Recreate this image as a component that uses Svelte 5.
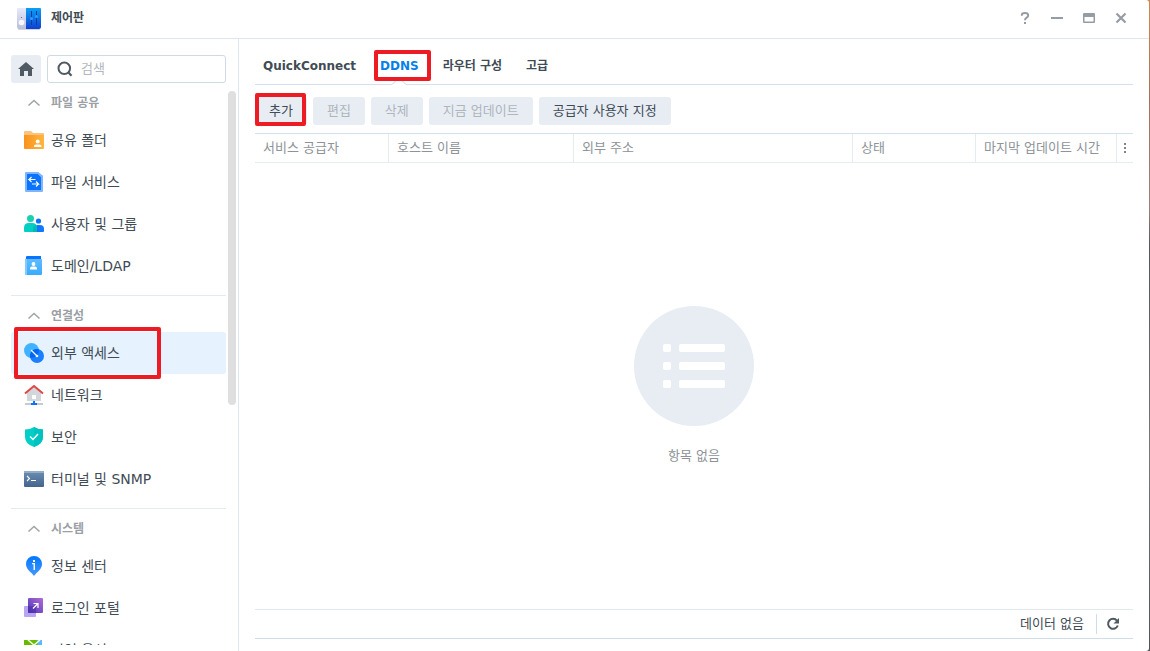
<script>
  let query = $state("");
  let activeTab = $state("DDNS");
  let selected = $state("외부 액세스");
  let closed = $state([]);

  const tabs = ["QuickConnect", "DDNS", "라우터 구성", "고급"];

  const actions = [
    { label: "추가", marked: true },
    { label: "편집", disabled: true },
    { label: "삭제", disabled: true },
    { label: "지금 업데이트", disabled: true },
    { label: "공급자 사용자 지정" },
  ];

  const columns = ["서비스 공급자", "호스트 이름", "외부 주소", "상태", "마지막 업데이트 시간"];

  const groups = [
    {
      name: "파일 공유",
      items: [
        { name: "공유 폴더", icon: "folder" },
        { name: "파일 서비스", icon: "file" },
        { name: "사용자 및 그룹", icon: "users" },
        { name: "도메인/LDAP", icon: "domain" },
      ],
    },
    {
      name: "연결성",
      items: [
        { name: "외부 액세스", icon: "access", marked: true },
        { name: "네트워크", icon: "network" },
        { name: "보안", icon: "shield" },
        { name: "터미널 및 SNMP", icon: "terminal" },
      ],
    },
    {
      name: "시스템",
      items: [
        { name: "정보 센터", icon: "info" },
        { name: "로그인 포털", icon: "portal" },
        { name: "지역 옵션", icon: "region" },
      ],
    },
  ];

  function toggle(name) {
    closed = closed.includes(name) ? closed.filter((n) => n !== name) : [...closed, name];
  }

  function select(event, name) {
    event.preventDefault();
    selected = name;
  }
</script>

{#snippet icon(name)}
  <svg class="icon" width="20" height="20" viewBox="0 0 20 20" aria-hidden="true">
    {#if name === "folder"}
      <path d="M0 2q0-1 1-1h6l2 2h10q1 0 1 1v5H0z" fill="#fbc47c" />
      <path d="M0 5h20v13q0 1-1 1H1q-1 0-1-1z" fill="url(#g-folder)" />
      <circle cx="13.700" cy="11.500" r="2" fill="#fff" />
      <path d="M10 17v-.5q0-2 2-2h3.500q2 0 2 2v.5z" fill="#fff" />
    {:else if name === "file"}
      <path d="M1 1q0-1 1-1h12l5 4v15q0 1-1 1H2q-1 0-1-1z" fill="#7fb5ff" />
      <path d="M3 2h11l3 3v13H3z" fill="#0a73ff" />
      <path d="M14 0l5 4v1h-2l-3-3z" fill="#7fb5ff" />
      <path d="M7.500 5 5 7.500h6.500M7.500 10 5 7.500M12 9.500l2.500 2.500H8M12 14.500l2.500-2.500" fill="none" stroke="#fff" stroke-width="1.100" />
    {:else if name === "users"}
      <circle cx="6.500" cy="4.500" r="3.500" fill="#1bd0b0" />
      <circle cx="14.500" cy="7" r="2.600" fill="#0a73ff" />
      <path d="M10 18v-3q0-4 4-4h2q4 0 4 4v2q0 1-1 1z" fill="#1177ff" />
      <path d="M0 17v-3q0-5 5-5h3q5 0 5 5v4H1q-1 0-1-1z" fill="#00cfc3" />
      <path d="M9 18v-3q0-3 3-4 1 1.500 1 4v3z" fill="#00b9b4" />
    {:else if name === "domain"}
      <path d="M2 1q0-1 1-1h14v4H2z" fill="#0a73ff" />
      <path d="M1 2q0 1 1 1h15q1 0 1 1v14q0 1-1 1H2q-1 0-1-1z" fill="url(#g-domain)" />
      <path d="M1 3h2v16H2q-1 0-1-1z" fill="#82cbff" />
      <circle cx="9.500" cy="8" r="1.900" fill="#fff" />
      <path d="M6 13.500v-1q0-2 2-2h3q2 0 2 2v1z" fill="#fff" />
    {:else if name === "access"}
      <circle cx="7.500" cy="7.500" r="7.500" fill="#3fb3ff" />
      <circle cx="13" cy="13" r="7" fill="#1a80ff" />
      <path d="M14.700 6.200a7.500 7.500 0 0 1-8.600 8.500 7 7 0 0 1 8.600-8.500z" fill="#0067ee" />
      <path d="M7 7l5.500 5.500" stroke="#fff" stroke-width="1.200" />
      <circle cx="13" cy="13" r="1.300" fill="#fff" />
    {:else if name === "network"}
      <path d="M3 7l7-5 7 5v9H3z" fill="#d3d6da" />
      <path d="M1 8.500 10 1l9 7.500" fill="none" stroke="#dd4a45" stroke-width="2" />
      <rect x="8" y="10" width="4" height="4" fill="#fff" />
      <path d="M1 18h18v2H1z" fill="#c6cbd1" />
      <path d="M9 16h2v2h2v2H7v-2h2z" fill="#0a73ff" />
    {:else if name === "shield"}
      <path d="M10 0q4 2.500 9 2.500V10q0 7-9 10-9-3-9-10V2.500Q6 2.500 10 0z" fill="#00cfc8" />
      <path d="M10 0q4 2.500 9 2.500V10q0 7-9 10z" fill="#00c2bf" />
      <path d="M6 9.500l3 3 5-5.500" fill="none" stroke="#fff" stroke-width="1.500" />
    {:else if name === "terminal"}
      <rect y="2" width="20" height="16" rx="1" fill="url(#g-terminal)" />
      <path d="M0 4V3q0-1 1-1h18q1 0 1 1v1z" fill="#94acc7" />
      <path d="M3 7l2.500 2.500L3 12M7 11.500h5" fill="none" stroke="#fff" stroke-width="1.100" />
    {:else if name === "info"}
      <path d="M10 0a8 8 0 0 1 8 8c0 4-3 7-5.500 9L10 20l-2.500-3C5 15 2 12 2 8a8 8 0 0 1 8-8z" fill="url(#g-info)" />
      <path d="M9 4h2v2H9zM8 7h3v7H9.500V8.200H8z" fill="#fff" />
    {:else if name === "portal"}
      <rect y="8" width="12" height="11" rx="1" fill="#baa5f2" />
      <rect x="4" width="15" height="15" rx="1" fill="url(#g-portal)" />
      <path d="M4 8h7q1 0 1 1v6H5q-1 0-1-1z" fill="#4228a0" opacity=".45" />
      <path d="M9 10.500 13.500 6M9.500 5.500H14V10" fill="none" stroke="#fff" stroke-width="1.200" />
    {:else}
      <rect width="18" height="20" fill="#66bb00" />
      <path d="M13 0h5v20h-2z" fill="#5cb8ff" />
      <path d="M4 0l6 5 6-5" fill="none" stroke="#f3ffdc" stroke-width="1.500" />
    {/if}
  </svg>
{/snippet}

<svg class="defs" width="0" height="0" aria-hidden="true">
  <defs>
    <linearGradient id="g-folder"><stop stop-color="#f9921d" /><stop offset="1" stop-color="#ffb63d" /></linearGradient>
    <linearGradient id="g-domain" x2="0" y2="1"><stop stop-color="#62bdff" /><stop offset="1" stop-color="#38abff" /></linearGradient>
    <linearGradient id="g-terminal" x2="0" y2="1"><stop stop-color="#6d8fb3" /><stop offset="1" stop-color="#44648c" /></linearGradient>
    <linearGradient id="g-info" x2="0" y2="1"><stop stop-color="#0077ff" /><stop offset="1" stop-color="#4798ff" /></linearGradient>
    <linearGradient id="g-portal" x1="1" x2="0" y2="1"><stop stop-color="#b36bd6" /><stop offset="1" stop-color="#4a35b8" /></linearGradient>
    <linearGradient id="g-panel" x2="0" y2="1"><stop stop-color="#0ba0f5" /><stop offset="1" stop-color="#103fd2" /></linearGradient>
    <linearGradient id="g-case" x2="0" y2="1"><stop stop-color="#e6eafa" /><stop offset="1" stop-color="#b9bedb" /></linearGradient>
  </defs>
</svg>

<div class="window">
  <header class="titlebar">
    <svg class="logo" width="24" height="24" viewBox="0 0 24 24" aria-hidden="true">
      <rect x="1" y="21" width="22" height="3" rx="1" fill="#d3d5dc" />
      <path d="M0 3q0-1 1-1h8v21H2q-2 0-2-2z" fill="url(#g-case)" />
      <path d="M9 2h14q1 0 1 1v18q0 2-2 2H9z" fill="url(#g-panel)" />
      <circle cx="4.500" cy="16.500" r="2.800" fill="#f7f8ff" />
      <circle cx="4.500" cy="11.500" r=".6" fill="#666b85" />
      <path d="M14.500 5v14M19.500 5v14" stroke="#0b3c94" />
      <circle cx="14.500" cy="12.500" r="1.600" fill="#2a9bff" />
      <circle cx="19.500" cy="10.500" r="1.600" fill="#2a9bff" />
    </svg>
    <h1>제어판</h1>
    <button class="win" aria-label="도움말">
      <svg width="14" height="14" viewBox="0 0 14 14"><path d="M3.800 4.800V4.300Q3.800 2 7 2t3.200 2.400Q10.200 5.700 8.600 6.700T7 9.300M7 11v2" fill="none" stroke="currentColor" stroke-width="2" /></svg>
    </button>
    <button class="win" aria-label="최소화">
      <svg width="14" height="14" viewBox="0 0 14 14"><path d="M1 7h12" stroke="currentColor" stroke-width="2" /></svg>
    </button>
    <button class="win" aria-label="최대화">
      <svg width="14" height="14" viewBox="0 0 14 14"><path d="M2 2h10q1 0 1 1v8q0 1-1 1H2q-1 0-1-1V3q0-1 1-1zM2.500 6v4.500h9V6z" fill="currentColor" fill-rule="evenodd" /></svg>
    </button>
    <button class="win" aria-label="닫기">
      <svg width="14" height="14" viewBox="0 0 14 14"><path d="M2.500 2.500l9 9M11.500 2.500l-9 9" stroke="currentColor" stroke-width="2.200" /></svg>
    </button>
  </header>

  <div class="body">
    <aside>
      <div class="finder">
        <button class="home" aria-label="홈">
          <svg width="16" height="14" viewBox="0 0 16 14"><path d="M8 0 0 7h2v7h4V9h4v5h4V7h2z" fill="currentColor" /></svg>
        </button>
        <label class="search">
          <svg width="16" height="16" viewBox="0 0 16 16" aria-hidden="true"><circle cx="7.300" cy="7.300" r="5.800" fill="none" stroke="currentColor" stroke-width="2" /><path d="M11 11l3.500 3.800" stroke="currentColor" stroke-width="2.200" /></svg>
          <input type="text" placeholder="검색" aria-label="검색" bind:value={query} />
        </label>
      </div>

      <nav>
        {#each groups as group}
          <section>
            <button class="group" onclick={() => toggle(group.name)}>
              <svg class:closed={closed.includes(group.name)} width="20" height="12" viewBox="0 0 20 12" aria-hidden="true"><path d="M4.500 8.500 10 3.500l5.500 5" fill="none" stroke="#a0a5aa" stroke-width="1.600" /></svg>
              {group.name}
            </button>
            {#if !closed.includes(group.name)}
              {#each group.items as item}
                <a
                  href="#{item.icon}"
                  class="item"
                  class:selected={selected === item.name}
                  class:marked={item.marked}
                  onclick={(e) => select(e, item.name)}
                >
                  {@render icon(item.icon)}
                  {item.name}
                </a>
              {/each}
            {/if}
          </section>
        {/each}
        <div class="thumb"></div>
      </nav>
    </aside>

    <main>
      <div class="tabs" role="tablist">
        {#each tabs as tab}
          <button
            role="tab"
            aria-selected={activeTab === tab}
            class="tab"
            class:active={activeTab === tab}
            class:marked={tab === "DDNS"}
            onclick={() => (activeTab = tab)}>{tab}</button>
        {/each}
      </div>

      <div class="toolbar">
        {#each actions as action}
          <button class="action" class:marked={action.marked} disabled={action.disabled}>{action.label}</button>
        {/each}
      </div>

      <table>
        <colgroup>
          <col class="provider" />
          <col class="host" />
          <col />
          <col class="status" />
          <col class="updated" />
          <col class="more" />
        </colgroup>
        <thead>
          <tr>
            {#each columns as column}
              <th scope="col">{column}</th>
            {/each}
            <th class="menu">
              <button aria-label="열 선택">
                <svg width="4" height="12" viewBox="0 0 4 12"><path d="M1 1h2v2H1zM1 5h2v2H1zM1 9h2v2H1z" fill="#80858b" /></svg>
              </button>
            </th>
          </tr>
        </thead>
      </table>

      <div class="empty">
        <svg width="120" height="120" viewBox="0 0 120 120" aria-hidden="true">
          <circle cx="60" cy="60" r="60" fill="#e8edf4" />
          {#each [38, 56, 74] as y}
            <rect x="29" {y} width="8" height="8" rx="2" fill="#fff" />
            <rect x="45" {y} width="46" height="8" rx="2" fill="#fff" />
          {/each}
        </svg>
        <p>항목 없음</p>
      </div>

      <footer>
        <span>데이터 없음</span>
        <button class="refresh" aria-label="새로 고침">
          <svg width="14" height="14" viewBox="0 0 14 14"><path d="M11 3.600A5 5 0 1 0 11.800 8.500" fill="none" stroke="currentColor" stroke-width="2" /><path d="M13 1v5.500H7.500z" fill="currentColor" /></svg>
        </button>
      </footer>
    </main>
  </div>
</div>

<style>
  :global(body) {
    margin: 0;
    background: linear-gradient(#d08a50, #a8705c 15%, #99807c 32%, #55555c 38%, #77777c 70%, #505358);
  }

  .defs {
    position: absolute;
  }

  .window {
    display: flex;
    flex-direction: column;
    height: 100vh;
    margin-right: 1px;
    border-radius: 0 3px 3px 0;
    overflow: hidden;
    background: #fff;
    color: #414b55;
    font-family: "DejaVu Sans", "Noto Sans CJK KR", sans-serif;
    font-size: 13px;
    line-height: 20px;
  }

  button {
    padding: 0;
    border: 0;
    background: none;
    color: inherit;
    font: inherit;
    cursor: pointer;
  }

  svg {
    flex: none;
    display: block;
  }

  .titlebar {
    display: flex;
    align-items: center;
    height: 36px;
    padding: 0 12px 2px 17px;
    border-bottom: 1px solid #dfe6ee;
  }

  .titlebar h1 {
    flex: 1;
    margin: 0 0 0 10px;
    font-size: 12px;
    font-weight: bold;
  }

  .win {
    display: flex;
    justify-content: center;
    width: 32px;
    color: #969ca3;
  }

  .body {
    flex: 1;
    display: flex;
    min-height: 0;
  }

  aside {
    display: flex;
    flex-direction: column;
    flex: none;
    width: 238px;
    padding: 16px 0 6px;
    border-right: 1px solid #dfe6ee;
  }

  .finder {
    display: flex;
    gap: 6px;
    margin: 0 12px 2px 11px;
  }

  .home {
    display: flex;
    align-items: center;
    justify-content: center;
    width: 30px;
    height: 28px;
    border-radius: 3px;
    background: #e8edf4;
    color: #505a64;
  }

  .search {
    flex: 1;
    display: flex;
    align-items: center;
    gap: 8px;
    height: 26px;
    padding: 0 8px 0 9px;
    border: 1px solid #d0dae5;
    border-radius: 3px;
    color: #505a64;
  }

  .search input {
    flex: 1;
    width: 0;
    padding: 0;
    border: 0;
    outline: none;
    background: none;
    color: #414b55;
    font: inherit;
  }

  .search input::placeholder {
    color: #b3b8be;
    opacity: 1;
  }

  nav {
    position: relative;
    flex: 1;
    min-height: 0;
    overflow: hidden;
    padding: 0 12px 0 11px;
  }

  section + section {
    margin-top: 8px;
    padding-top: 2px;
    border-top: 1px solid #e4eaf1;
  }

  .group {
    display: flex;
    align-items: center;
    gap: 7px;
    width: 100%;
    height: 34px;
    padding: 2px 0 0 13px;
    color: #9ba0a6;
    font-size: 12px;
    font-weight: bold;
  }

  .closed {
    transform: rotate(180deg);
  }

  .item {
    position: relative;
    display: flex;
    align-items: center;
    gap: 7px;
    height: 42px;
    padding-left: 13px;
    border-radius: 3px;
    color: #414b55;
    font-size: 14px;
    text-decoration: none;
  }

  .item.selected {
    background: #e6f2fe;
  }

  .thumb {
    position: absolute;
    top: 6px;
    right: 2px;
    width: 8px;
    height: 56%;
    border-radius: 4px;
    background: #dfdfdf;
  }

  main {
    flex: 1;
    display: flex;
    flex-direction: column;
    min-width: 0;
    padding: 0 16px 12px;
  }

  .tabs {
    display: flex;
    gap: 24px;
    height: 45px;
    padding: 0 8px;
    border-bottom: 1px solid #d5e0ea;
  }

  .tab {
    position: relative;
    padding-top: 8px;
    font-size: 12px;
    font-weight: bold;
  }

  .tab.active {
    color: #057feb;
  }

  .tab.active::before {
    content: "";
    position: absolute;
    bottom: -5px;
    left: 50%;
    width: 8px;
    height: 8px;
    margin-left: -5px;
    border: 1px solid #d5e0ea;
    border-right-color: transparent;
    border-bottom-color: transparent;
    background: #fff;
    transform: rotate(45deg);
  }

  /* red call-out frames */
  .marked {
    position: relative;
  }

  .marked::after {
    content: "";
    position: absolute;
    border: 4px solid #ed1c24;
    border-radius: 2px;
    pointer-events: none;
  }

  .item.marked::after {
    inset: -5px 65px -5px 3px;
  }

  .tab.marked::after {
    inset: 11px -12px 3px -6px;
  }

  .action.marked::after {
    inset: -4px 1px -1px 0;
  }

  .toolbar {
    display: flex;
    gap: 6px;
    padding: 12px 0 8px;
  }

  .action {
    height: 28px;
    padding: 0 14px;
    border-radius: 3px;
    background: #e8edf4;
  }

  .action:disabled {
    color: #afb5bc;
    cursor: default;
  }

  table {
    width: 100%;
    table-layout: fixed;
    border-collapse: separate;
    border-spacing: 0;
    border-top: 1px solid #d5e0ea;
    border-bottom: 1px solid #e6ebf3;
  }

  .provider {
    width: 134px;
  }

  .host {
    width: 185px;
  }

  .status {
    width: 123px;
  }

  .updated {
    width: 141px;
  }

  .more {
    width: 16px;
  }

  th {
    height: 28px;
    padding: 0 0 0 8px;
    border-right: 1px solid #e6ebf3;
    color: #8d9399;
    font-weight: normal;
    text-align: left;
    white-space: nowrap;
  }

  th.menu {
    padding: 0;
    border-right: 0;
  }

  .menu button {
    display: block;
    margin: 0 auto;
  }

  .empty {
    flex: 1;
    display: flex;
    flex-direction: column;
    align-items: center;
    justify-content: center;
    gap: 20px;
    color: #8d9399;
  }

  .empty p {
    margin: 0;
  }

  footer {
    display: flex;
    align-items: center;
    justify-content: flex-end;
    height: 28px;
    border-top: 1px solid #e1e9f1;
    border-bottom: 1px solid #d0dce8;
  }

  .refresh {
    display: flex;
    align-items: center;
    height: 20px;
    margin-left: 12px;
    padding: 0 13px 0 9px;
    border-left: 1px solid #d0dce8;
    color: #505a64;
  }
</style>
